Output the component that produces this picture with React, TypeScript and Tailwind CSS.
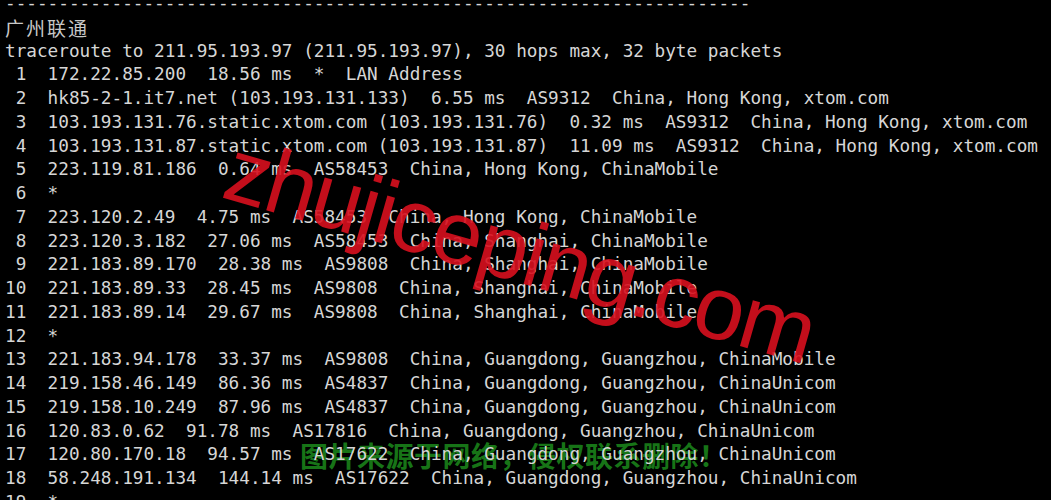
const lines: string[] = [
  ' 1  172.22.85.200  18.56 ms  *  LAN Address',
  ' 2  hk85-2-1.it7.net (103.193.131.133)  6.55 ms  AS9312  China, Hong Kong, xtom.com',
  ' 3  103.193.131.76.static.xtom.com (103.193.131.76)  0.32 ms  AS9312  China, Hong Kong, xtom.com',
  ' 4  103.193.131.87.static.xtom.com (103.193.131.87)  11.09 ms  AS9312  China, Hong Kong, xtom.com',
  ' 5  223.119.81.186  0.64 ms  AS58453  China, Hong Kong, ChinaMobile',
  ' 6  *',
  ' 7  223.120.2.49  4.75 ms  AS58453  China, Hong Kong, ChinaMobile',
  ' 8  223.120.3.182  27.06 ms  AS58453  China, Shanghai, ChinaMobile',
  ' 9  221.183.89.170  28.38 ms  AS9808  China, Shanghai, ChinaMobile',
  '10  221.183.89.33  28.45 ms  AS9808  China, Shanghai, ChinaMobile',
  '11  221.183.89.14  29.67 ms  AS9808  China, Shanghai, ChinaMobile',
  '12  *',
  '13  221.183.94.178  33.37 ms  AS9808  China, Guangdong, Guangzhou, ChinaMobile',
  '14  219.158.46.149  86.36 ms  AS4837  China, Guangdong, Guangzhou, ChinaUnicom',
  '15  219.158.10.249  87.96 ms  AS4837  China, Guangdong, Guangzhou, ChinaUnicom',
  '16  120.83.0.62  91.78 ms  AS17816  China, Guangdong, Guangzhou, ChinaUnicom',
  '17  120.80.170.18  94.57 ms  AS17622  China, Guangdong, Guangzhou, ChinaUnicom',
  '18  58.248.191.134  144.14 ms  AS17622  China, Guangdong, Guangzhou, ChinaUnicom',
  '19  *',
];

export default function App() {
  return (
    <div className="relative w-[1051px] h-[500px] overflow-hidden bg-black">
      {/* green watermark sits under the terminal text */}
      <div className="absolute left-[300px] top-[440px] font-['Noto_Sans_CJK_SC',sans-serif] text-[28px] tracking-[0.5px] leading-[30px] font-bold text-[#1c8a1c]/85 whitespace-nowrap">
        图片来源于网络，侵权联系删除！
      </div>

      <div className="relative -mt-[8px] pl-[5px] font-['DejaVu_Sans_Mono','Liberation_Mono',monospace] text-[17.7px] leading-[23.75px] text-[#d6d6d6] whitespace-pre">
        <div>{'-'.repeat(70)}</div>
        <div className="font-['Noto_Sans_CJK_SC',sans-serif] text-[19px] tracking-[2px] text-[#c8c8c8]">
          广州联通
        </div>
        <div>traceroute to 211.95.193.97 (211.95.193.97), 30 hops max, 32 byte packets</div>
        {lines.map((l, i) => (
          <div key={i}>{l}</div>
        ))}
      </div>

      <div className="absolute left-[228px] top-[122px] origin-left rotate-[16deg] font-['Liberation_Sans',Arial,sans-serif] text-[90px] tracking-[-2.5px] leading-none text-[#d8101e]/90 whitespace-nowrap">
        zhujiceping.com
      </div>
    </div>
  );
}
